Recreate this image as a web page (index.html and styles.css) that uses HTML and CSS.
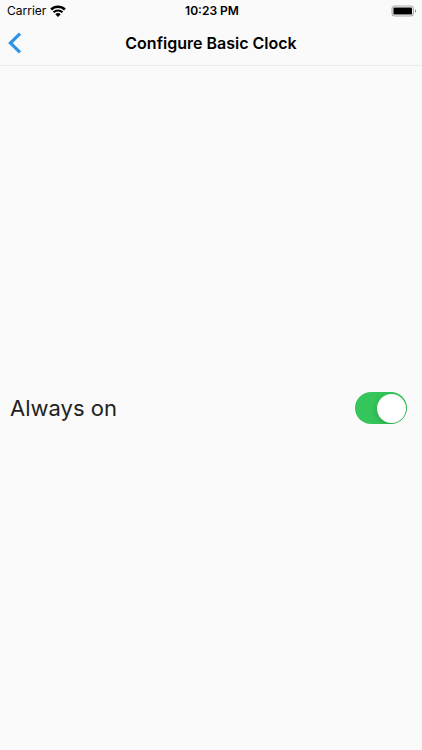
FILE: index.html
```html
<!DOCTYPE html>
<html lang="en">
<head>
<meta charset="utf-8">
<meta name="viewport" content="width=device-width, initial-scale=1">
<title>Configure Basic Clock</title>
<link rel="stylesheet" href="styles.css">
</head>
<body>
<div class="status">
  <div class="carrier">
    <span>Carrier</span>
    <svg class="wifi" viewBox="0 0 16 12" aria-hidden="true">
      <path d="M1.1 4.5a9.8 9.8 0 0 1 13.8 0" fill="none" stroke="#000" stroke-width="2.5"/>
      <path d="M3.5 7.3a6.4 6.4 0 0 1 9 0" fill="none" stroke="#000" stroke-width="2"/>
      <path d="M8 12 5.3 9.3a3.8 3.8 0 0 1 5.4 0z"/>
    </svg>
  </div>
  <time class="time">10:23 PM</time>
  <svg class="battery" viewBox="0 0 26 12" aria-hidden="true">
    <rect x="1" y="1" width="21.4" height="10" rx="3" fill="#fafafa" stroke="#aaa" stroke-width="1.1"/>
    <rect x="2.4" y="2.4" width="18.6" height="7.2" rx="1.3"/>
    <path d="M24 4.3c1.4.5 1.4 2.9 0 3.4z" fill="#888"/>
  </svg>
</div>
<header class="nav">
  <a class="back" href="#" aria-label="Back">
    <svg viewBox="0 0 14 22" aria-hidden="true"><path d="M12 1.7 2.4 11 12 20.3" fill="none" stroke="#2d94e6" stroke-width="3.2"/></svg>
  </a>
  <h1 class="title">Configure Basic Clock</h1>
</header>
<main class="content">
  <div class="setting">
    <label for="always-on">Always on</label>
    <input class="switch" id="always-on" type="checkbox" role="switch" checked>
  </div>
</main>
</body>
</html>
```
FILE: styles.css
```css
* { box-sizing: border-box; }

body {
  display: flex;
  flex-direction: column;
  min-height: 100vh;
  margin: 0;
  background: #fafafa;
  color: #000;
  font-family: Inter, "Liberation Sans", sans-serif;
}

.status {
  display: grid;
  grid-template-columns: 1fr auto 1fr;
  align-items: center;
  height: 22px;
  padding: 0 5px 0 7px;
  font-size: 12px;
  line-height: 16px;
}

.carrier {
  display: flex;
  align-items: center;
  gap: 4px;
}

.wifi { width: 16px; height: 12px; }
.time { font-weight: 600; }

.battery {
  justify-self: end;
  width: 26px;
  height: 12px;
}

.nav {
  display: grid;
  grid-template-columns: 1fr auto 1fr;
  align-items: center;
  height: 44px;
  padding: 0 8px 2px;
  border-bottom: 1px solid #ebebeb;
}

.back { justify-self: start; }

.back svg {
  display: block;
  width: 14px;
  height: 22px;
}

.title {
  margin: 0;
  font-size: 16px;
  font-weight: 600;
  line-height: 24px;
}

.content {
  display: flex;
  flex: 1;
  flex-direction: column;
  justify-content: center;
}

.setting {
  display: flex;
  align-items: center;
  justify-content: space-between;
  padding: 0 15px 0 10px;
  color: #222;
  font-size: 22px;
  line-height: 32px;
}

.switch {
  display: flex;
  align-items: center;
  justify-content: flex-end;
  width: 52px;
  height: 32px;
  margin: 0;
  padding: 1px;
  border-radius: 16px;
  background: #34c65a;
  overflow: hidden;
  appearance: none;
}

.switch::before {
  width: 29px;
  height: 29px;
  border-radius: 50%;
  background: #fff;
  box-shadow: 0 2px 6px rgb(0 0 0 / 20%);
  content: "";
}

.switch:not(:checked) {
  justify-content: flex-start;
  background: #e4e4e6;
}
```
